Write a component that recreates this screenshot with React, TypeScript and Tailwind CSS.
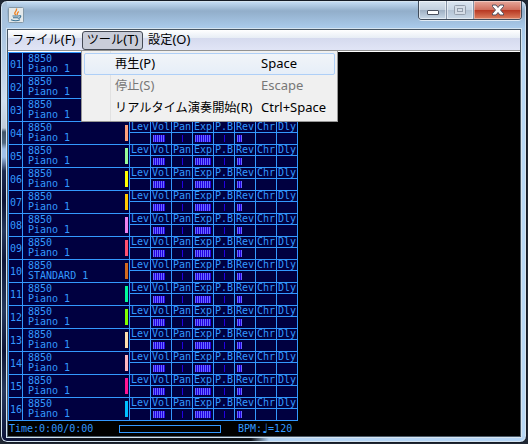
import React from "react";

const marks = ["#ff0000", "#00ff00", "#4488ff", "#ffa07a", "#98fb98", "#ffff00", "#ffc800", "#ee82ee", "#ff4f6e", "#d2691e", "#00fa9a", "#7fff00", "#ffdead", "#ffb6c1", "#ff1493", "#00bfff"];
const meters: [string, number, string][] = [
  ["Lev", 0, ""],
  ["Vol", 12, "ml-[2px]"],
  ["Pan", 1, "ml-[10px]"],
  ["Exp", 16, "ml-[2px]"],
  ["P.B", 1, "ml-[10px]"],
  ["Rev", 5, "ml-[2px]"],
  ["Chr", 0, ""],
  ["Dly", 0, ""],
];

function Meter({ label, size, offset }: { label: string; size: number; offset: string }) {
  return (
    <div className="w-[21px] border-r border-[#3399ff]">
      <div className="h-[11px] border-b border-[#3399ff] pl-px leading-[9px] whitespace-pre">{label}</div>
      <div className="flex h-[11px] items-center">
        {size > 1 && (
          <div
            className={`h-[7px] bg-[repeating-linear-gradient(90deg,#6a6aff_0px,#6a6aff_1px,#2200e0_1px,#2200e0_2px)] ${offset}`}
            style={{ width: size }}
          />
        )}
        {size === 1 && <div className={`h-[7px] w-px bg-[#2200e0] ${offset}`} />}
      </div>
    </div>
  );
}

function Track({ index }: { index: number }) {
  return (
    <div className="flex h-[23px] w-[290px] border-b border-l border-[#3399ff] bg-[#000040]">
      <div className="w-[14px] border-r border-[#3399ff] pt-[6px] pl-px leading-[11px]">{String(index + 1).padStart(2, "0")}</div>
      <div className="flex w-[107px] justify-between border-r border-[#3399ff] pl-[5px]">
        <div className="pt-px leading-[10px] whitespace-pre">
          <div>8850</div>
          <div>{index === 9 ? "STANDARD 1" : "Piano 1"}</div>
        </div>
        <div className="mt-[3px] mr-px h-4 w-[3px]" style={{ background: marks[index] }} />
      </div>
      {meters.map(([label, size, offset]) => (
        <Meter key={label} label={label} size={size} offset={offset} />
      ))}
    </div>
  );
}

function JavaIcon() {
  return (
    <svg width="16" height="16" viewBox="0 0 16 16">
      <rect x=".5" y=".5" width="15" height="15" rx="1" fill="#e4e9eb" stroke="#8499a8" />
      <path d="M8 8C4.5 5.5 9.5 4.500 8.500 1.500M9 8c1-1.500-.8-1.500 1.800-3.500" fill="none" stroke="#ed8324" strokeWidth="1.300" />
      <path d="M4.500 9h6M5 10.800h5M3 12.800q5 1.800 9 0M10.500 9q3-.8 2 1t-2.500 1" fill="none" stroke="#3b7193" strokeWidth="1.100" />
    </svg>
  );
}

function TitleBar() {
  return (
    <div className="flex h-[28px] items-start justify-between pl-[7px]">
      <div className="pt-[6px]"><JavaIcon /></div>
      <div className="mr-[4px] flex h-[19px] w-[104px] overflow-hidden rounded-b-[4px] border border-t-0 border-[#404c5b] shadow-[0_1px_0_#ffffffb0]">
        <div className="flex w-[28px] items-center justify-center border-r border-[#8794a7] bg-[linear-gradient(#dbe5f0,#c2cfdd_48%,#9eafc2_50%,#c9d9e8)] shadow-[inset_0_0_0_1px_#ffffff80]">
          <svg width="14" height="14" viewBox="0 0 14 14"><rect x="1.500" y="7.500" width="11" height="4" rx=".5" fill="#fff" stroke="#4b515f" /></svg>
        </div>
        <div className="flex w-[27px] items-center justify-center border-r border-[#8794a7] bg-[linear-gradient(#dbe5f0,#c9d6e4_48%,#b4c3d4_50%,#c9d9e8)] shadow-[inset_0_0_0_1px_#ffffff80]">
          <svg width="14" height="12" viewBox="0 0 14 12" fill="#d5dde7" stroke="#949eac"><rect x="1.500" y="1.500" width="11" height="9" rx="1" /><rect x="4.500" y="4.500" width="5" height="3" /></svg>
        </div>
        <div className="flex flex-1 items-center justify-center bg-[linear-gradient(#e7a89c,#d0705f_48%,#b63520_50%,#dd8060)] shadow-[inset_0_0_0_1px_#ffffff60]">
          <svg width="14" height="12" viewBox="0 0 14 12"><path d="M1.500 1h3.500l2 2.500L9 1h3.500v1.500L9.500 6l3 3.500V11H9L7 8.500 5 11H1.500V9.500l3-3.500-3-3.500z" fill="#fff" stroke="#545361" /></svg>
        </div>
      </div>
    </div>
  );
}

function Caption({ text, mnemonic }: { text: string; mnemonic: string }) {
  return (
    <span className="whitespace-nowrap text-[12.2px]">
      {text}
      <span className="text-[13px]">({mnemonic})</span>
    </span>
  );
}

function MenuItem({ text, mnemonic, shortcut, state = "" }: { text: string; mnemonic: string; shortcut: string; state?: string }) {
  return (
    <div className={`flex h-[22px] items-center rounded-[2px] border pl-[30px] ${state || "border-transparent"}`}>
      <span className="flex w-[146px]"><Caption text={text} mnemonic={mnemonic} /></span>
      <span className="whitespace-nowrap">{shortcut}</span>
    </div>
  );
}

export default function App() {
  return (
    <div className="h-[444px] w-[528px] overflow-hidden bg-[#202834] font-['Noto_Sans','Noto_Sans_CJK_JP',sans-serif] text-[13px] text-black">
      <div className="h-[443px] w-[527px] rounded-[7px] border border-[#151b26] shadow-[inset_0_0_0_1px_#d5e4f0] [background:linear-gradient(90deg,#0c1238_0px,#101838_40px,#10141c_60px,#0c1016_250px,#b4d4f4_268px,#b4d4f4_100%)_0_100%/100%_6px_no-repeat,linear-gradient(180deg,#a8c0d8_0px,#a8c4e0_28px,#d0e0f0_100px,#c0ccd8_127px,#405468_131px,#506880_142px,#a0c0e8_148px,#a0c0e8_156px,#1c2c50_170px,#0c1234_200px,#26385c_230px,#0e1638_260px,#26385c_310px,#0c1234_350px,#26385c_390px,#0c1238_100%)_0_0/6px_100%_no-repeat,linear-gradient(180deg,#c8e0f7_0px,#92aeca_10px,#a8c9e9_26px,#b8d8f5_60px,#b8d8f5_100%)]">
        <TitleBar />
        <div className="relative mx-[6px] h-[408px] w-[514px] border border-[#485765] bg-black shadow-[0_0_0_1px_#d5e4f0]">
          <div className="flex h-[21px] items-center border-b border-[#929292] bg-[linear-gradient(#fff_0px,#e7edf5_8px,#d5daee_8px,#e1e5f6_20px)]">
            <div className="flex w-[74px] pl-1"><Caption text="ファイル" mnemonic="F" /></div>
            <div className="flex h-[19px] w-[61px] items-center justify-center rounded-[3px] border border-[#454a55] bg-[#c9cdd9]"><Caption text="ツール" mnemonic="T" /></div>
            <div className="flex pl-[5px]"><Caption text="設定" mnemonic="O" /></div>
          </div>
          <div className="h-px bg-white" />
          <div className="font-['DejaVu_Sans_Mono',monospace] text-[10px] text-[#3399ff]">
            <div className="h-px w-[290px] bg-[#3399ff]" />
            {marks.map((mark, index) => <Track key={mark} index={index} />)}
            <div className="flex h-[15px] items-center pl-px">
              <span className="w-[110px] whitespace-nowrap">Time:0:00/0:00</span>
              <span className="h-2 w-[102px] border border-[#3399ff]" />
              <span className="flex items-center pl-[17px] whitespace-nowrap">
                <span>BPM:</span>
                <span className="flex w-[6px] justify-center font-['DejaVu_Sans'] text-[13px] leading-[10px]">♩</span>
                <span>=120</span>
              </span>
            </div>
          </div>
          <div className="absolute top-[21px] left-[73px] w-[257px] border border-t-0 border-[#979797] bg-[#f0f0f0] p-[2px]">
            <div className="absolute top-0 bottom-0 left-[28px] border-l border-[#e1e1e1]" />
            <div className="relative">
              <MenuItem text="再生" mnemonic="P" shortcut="Space" state="border-[#aecff7] bg-linear-to-b from-[#f1f4f8] to-[#e6eef8]" />
              <MenuItem text="停止" mnemonic="S" shortcut="Escape" state="border-transparent text-[#777]" />
              <MenuItem text="リアルタイム演奏開始" mnemonic="R" shortcut="Ctrl+Space" />
            </div>
          </div>
        </div>
      </div>
    </div>
  );
}
